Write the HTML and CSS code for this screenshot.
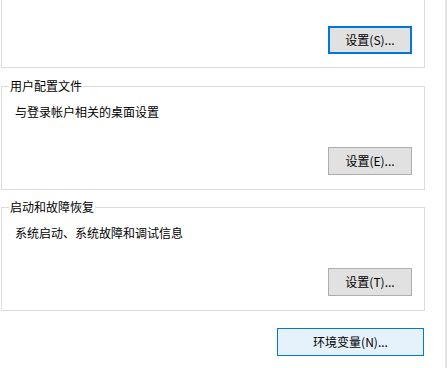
FILE: index.html
```html
<!DOCTYPE html>
<html lang="zh-CN">
<head>
<meta charset="utf-8">
<title>高级</title>
<link rel="stylesheet" href="styles.css">
</head>
<body>
<div class="page">
  <div class="content">
    <section class="group group-first">
      <div class="actions"><button class="btn btn-focus">设置(S)...</button></div>
    </section>
    <section class="group">
      <span class="legend">用户配置文件</span>
      <p class="desc">与登录帐户相关的桌面设置</p>
      <div class="actions"><button class="btn">设置(E)...</button></div>
    </section>
    <section class="group">
      <span class="legend">启动和故障恢复</span>
      <p class="desc">系统启动、系统故障和调试信息</p>
      <div class="actions"><button class="btn">设置(T)...</button></div>
    </section>
    <div class="footer"><button class="btn btn-env">环境变量(N)...</button></div>
  </div>
</div>
</body>
</html>
```

FILE: styles.css
```css
html, body {
  margin: 0;
  padding: 0;
  background: #ffffff;
}
body {
  width: 448px;
  height: 368px;
  overflow: hidden;
  font-family: "Noto Sans CJK SC", "Noto Sans", sans-serif;
  font-size: 12px;
  color: #000000;
}
.page {
  width: 445px;
  height: 368px;
  border-right: 2px solid #e3e3e3;
}
.content {
  display: flex;
  flex-direction: column;
  width: 424px;
  margin-left: 1px;
}
.group {
  position: relative;
  box-sizing: border-box;
  border: 1px solid #dcdcdc;
  padding: 17px 12px 14px 12px;
  margin-top: 18px;
}
.group-first {
  border-top: none;
  margin-top: 0;
  padding-top: 26px;
  padding-bottom: 13px;
}
.group + .group + .group {
  margin-top: 17px;
}
.legend {
  position: absolute;
  top: -9px;
  left: 7px;
  padding: 0 1px;
  background: #ffffff;
  line-height: 16px;
  white-space: nowrap;
}
.desc {
  margin: 0 0 0 1px;
  line-height: 16px;
}
.actions {
  display: flex;
  justify-content: flex-end;
  margin-top: 27px;
}
.group-first .actions {
  margin-top: 0;
}
.btn {
  box-sizing: border-box;
  width: 84px;
  height: 28px;
  margin: 0;
  padding: 0;
  font-family: inherit;
  font-size: 12px;
  color: #000000;
  background: #e1e1e1;
  border: 1px solid #adadad;
  border-radius: 0;
  line-height: 16px;
}
.btn-focus {
  border: 2px solid #0078d7;
}
.footer {
  display: flex;
  justify-content: flex-end;
  margin-top: 17px;
  padding-right: 1px;
}
.btn-env {
  width: 147px;
  background: #e5f1fb;
  border-color: #0078d7;
}
```
